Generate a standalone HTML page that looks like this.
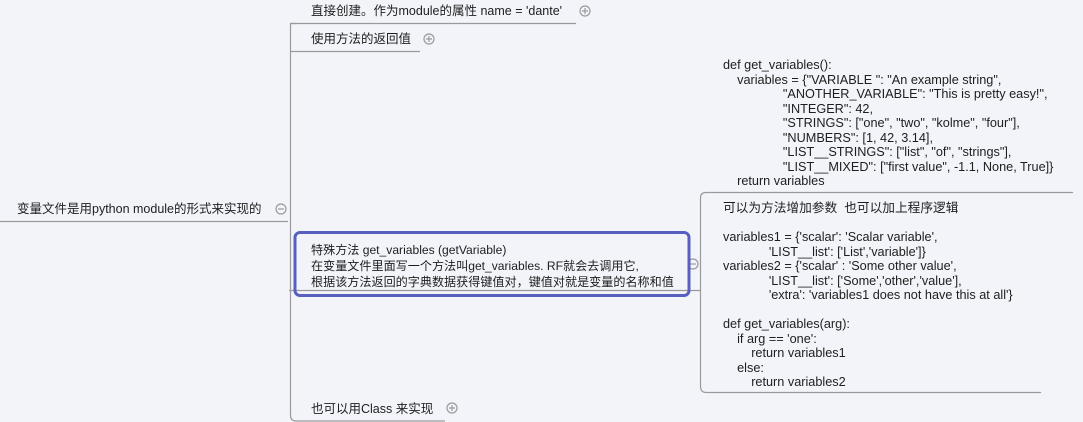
<!DOCTYPE html>
<html><head><meta charset="utf-8"><style>
body{margin:0;width:1083px;height:422px;background:#f3f4f9;position:relative;overflow:hidden;font-family:"Liberation Sans","Noto Sans CJK SC",sans-serif;color:#1e1e1e;font-size:12.5px}
.t{position:absolute;white-space:pre;line-height:14.5px}
.c{font-size:12.7px}
svg{position:absolute;left:0;top:0}
</style></head><body>
<svg width="1083" height="422" fill="none" stroke="#9a9a9c" stroke-width="1.2">
<path d="M0 221.5H288"/>
<path d="M296 23.5H290.5Q290.5 23.5 290.5 29V415Q290.5 421 296 421H445"/>
<path d="M290.5 23.5H576"/>
<path d="M290.5 51.5H420"/>
<path d="M289 290.5H700"/>
<path d="M1073 192.5H706Q700.5 192.5 700.5 198V386Q700.5 392.5 706 392.5H1041"/>
<circle cx="281" cy="209" r="5"/><path d="M278 209H284"/>
<circle cx="585" cy="11" r="5"/><path d="M582 11H588M585 8V14"/>
<circle cx="429" cy="39" r="5"/><path d="M426 39H432M429 36V42"/>
<circle cx="452" cy="408" r="5"/><path d="M449 408H455M452 405V411"/>
<circle cx="693" cy="264" r="5"/><path d="M690 264H696"/>
<rect x="295" y="232.5" width="394" height="63" rx="5" stroke="#5860bf" stroke-width="3"/>
</svg>
<div class="t" style="left:17px;top:202px">变量文件是用python module的形式来实现的</div>
<div class="t" style="left:311px;top:4px">直接创建。作为module的属性 name = 'dante'</div>
<div class="t" style="left:311px;top:32px">使用方法的返回值</div>
<div class="t" style="left:311px;top:242px;line-height:16px;font-size:12.1px">特殊方法 get_variables (getVariable)
在变量文件里面写一个方法叫get_variables. RF就会去调用它,
根据该方法返回的字典数据获得键值对，键值对就是变量的名称和值</div>
<div class="t" style="left:311px;top:402px">也可以用Class 来实现</div>
<div class="t c" style="left:723px;top:58px">def get_variables():
    variables = {"VARIABLE ": "An example string",
                 "ANOTHER_VARIABLE": "This is pretty easy!",
                 "INTEGER": 42,
                 "STRINGS": ["one", "two", "kolme", "four"],
                 "NUMBERS": [1, 42, 3.14],
                 "LIST__STRINGS": ["list", "of", "strings"],
                 "LIST__MIXED": ["first value", -1.1, None, True]}
    return variables</div>
<div class="t c" style="left:723px;top:201px">可以为方法增加参数  也可以加上程序逻辑

variables1 = {'scalar': 'Scalar variable',
             'LIST__list': ['List','variable']}
variables2 = {'scalar' : 'Some other value',
             'LIST__list': ['Some','other','value'],
             'extra': 'variables1 does not have this at all'}

def get_variables(arg):
    if arg == 'one':
        return variables1
    else:
        return variables2</div>
</body></html>
